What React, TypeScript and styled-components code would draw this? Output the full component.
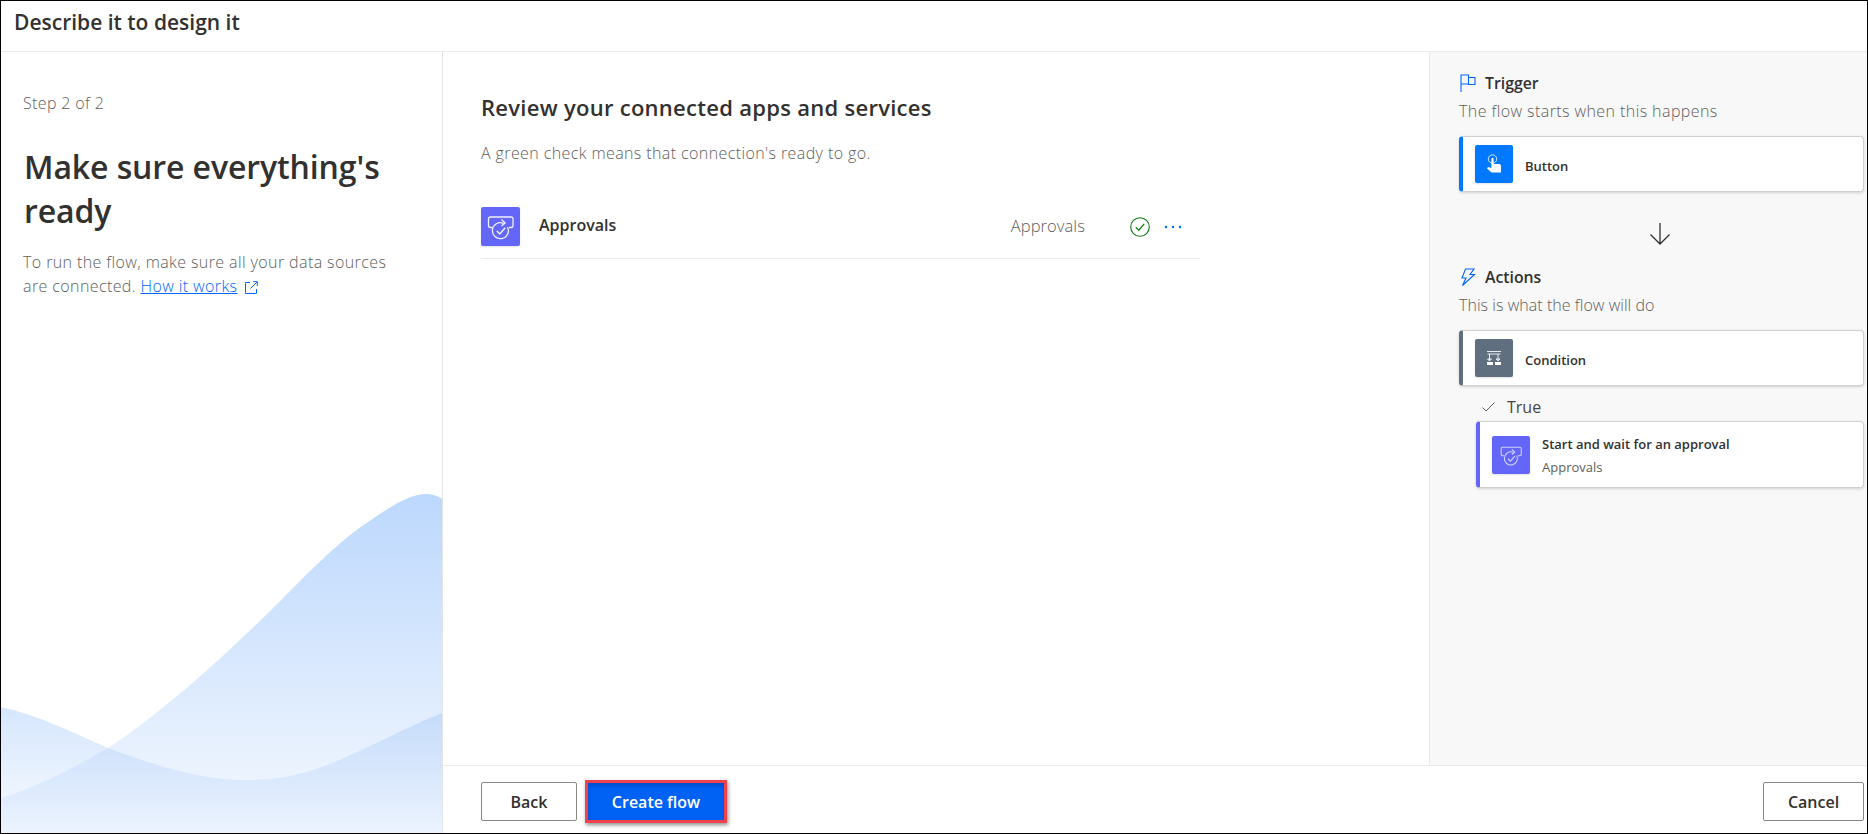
import React from "react";
import styled, { createGlobalStyle } from "styled-components";

const Global = createGlobalStyle`
  html, body { margin: 0; padding: 0; background: #fff; }
  body { font-family: "Open Sans", "Liberation Sans", sans-serif; color: #323130; }
  * { box-sizing: border-box; }
`;

const Frame = styled.div`
  width: 1868px;
  height: 834px;
  border: 1px solid #000;
  display: flex;
  flex-direction: column;
  overflow: hidden;
`;
const Header = styled.header`
  height: 51px;
  flex: none;
  border-bottom: 1px solid #edebe9;
  padding: 7px 0 0 13px;
  font-size: 21px;
  line-height: 28px;
  font-weight: 600;
`;
const Body = styled.div`
  flex: 1;
  display: flex;
  min-height: 0;
`;
const Side = styled.aside`
  width: 442px;
  flex: none;
  border-right: 1px solid #e4e4e4;
  display: flex;
  flex-direction: column;
  padding-top: 40px;
  min-height: 0;
`;
const SideText = styled.div`
  padding: 0 40px 0 22px;
`;
const Step = styled.div`
  font-size: 16px;
  line-height: 22px;
  font-weight: 300;
  letter-spacing: 0.35px;
  color: #605e5c;
`;
const BigTitle = styled.h1`
  margin: 31px 0 0 1px;
  font-size: 32px;
  line-height: 44px;
  font-weight: 600;
  letter-spacing: -0.1px;
`;
const SideCopy = styled.p`
  margin: 17px 0 0;
  font-size: 16px;
  line-height: 24px;
  font-weight: 300;
  letter-spacing: 0.4px;
  color: #605e5c;
`;
const Link = styled.a`
  color: #0066ff;
  text-decoration: underline;
`;
const External = styled.svg`
  width: 13px;
  height: 13px;
  margin-left: 8px;
  vertical-align: -2px;
`;
const Waves = styled.svg`
  display: block;
  margin-top: auto;
  width: 441px;
  height: 342px;
  flex: none;
`;
const Work = styled.div`
  flex: 1;
  display: flex;
  flex-direction: column;
  min-width: 0;
`;
const Columns = styled.div`
  flex: 1;
  display: flex;
  min-height: 0;
`;
const Center = styled.main`
  flex: 1;
  padding: 40px 0 0 38px;
  min-width: 0;
`;
const CenterInner = styled.div`
  width: 719px;
`;
const CenterTitle = styled.h2`
  margin: 0;
  font-size: 22px;
  line-height: 30px;
  font-weight: 600;
  letter-spacing: 0.28px;
`;
const CenterSub = styled.p`
  margin: 20px 0 0;
  font-size: 16px;
  line-height: 22px;
  font-weight: 300;
  letter-spacing: 0.4px;
  color: #605e5c;
`;
const ConnRow = styled.div`
  margin-top: 43px;
  height: 52px;
  border-bottom: 1px solid #edebe9;
  display: flex;
  align-items: flex-start;
`;
const ConnName = styled.div`
  margin-left: 19px;
  flex: 1;
  line-height: 37px;
  font-size: 16px;
  font-weight: 600;
`;
const ConnKind = styled.div`
  line-height: 37px;
  font-size: 16.5px;
  font-weight: 300;
  letter-spacing: 0.1px;
  color: #605e5c;
`;
const ConnStatus = styled.svg`
  margin: 9px 0 0 44px;
  width: 22px;
  height: 22px;
`;
const Dots = styled.svg`
  margin: 9px 16px 0 11px;
  width: 22px;
  height: 22px;
`;
const IconTile = styled.div<{ $bg: string; $size: number }>`
  width: ${(p) => p.$size}px;
  height: ${(p) => p.$size}px;
  flex: none;
  border-radius: 2px;
  background: ${(p) => p.$bg};
  display: flex;
  align-items: center;
  justify-content: center;
  box-shadow: 0 1px 2px rgba(0, 0, 0, 0.12);
`;
const Panel = styled.section`
  width: 438px;
  flex: none;
  background: #f8f8f8;
  border-left: 1px solid #edebe9;
  padding: 19px 3px 0 29px;
`;
const PanelHead = styled.div`
  display: flex;
  align-items: center;
  gap: 9px;
  height: 24px;
  margin-left: 1px;
  font-size: 15.8px;
  font-weight: 600;
`;
const PanelSub = styled.div<{ $track: number }>`
  margin-top: 5px;
  font-size: 16px;
  line-height: 22px;
  font-weight: 300;
  letter-spacing: ${(p) => p.$track}px;
  color: #605e5c;
`;
const Card = styled.div<{ $accent: string; $h: number }>`
  height: ${(p) => p.$h}px;
  background: #fff;
  border-radius: 4px;
  border: 1px solid #d2d0ce;
  border-left: 4px solid ${(p) => p.$accent};
  box-shadow: 0 1px 3px rgba(0, 0, 0, 0.16);
  display: flex;
  align-items: center;
  gap: 12px;
  padding-left: 12px;
`;
const CardName = styled.div`
  font-size: 13px;
  line-height: 18px;
  font-weight: 600;
`;
const SoloName = styled(CardName)`
  padding-top: 3px;
`;
const CardSub = styled.div`
  margin-top: 6px;
  font-size: 13px;
  line-height: 16px;
  color: #605e5c;
  font-weight: 400;
`;
const ArrowRow = styled.div`
  height: 73px;
  display: flex;
  align-items: center;
  justify-content: center;
  padding: 10px 3px 0 0;
`;
const CardSlot = styled.div`
  margin-top: 14px;
`;
const TrueRow = styled.div`
  display: flex;
  align-items: center;
  height: 24px;
  margin: 9px 0 2px 23px;
  gap: 12px;
  font-size: 16px;
  color: #484644;
  font-weight: 500;
`;
const Nested = styled.div`
  margin-left: 17px;
`;
const Footer = styled.footer`
  height: 68px;
  flex: none;
  border-top: 1px solid #edebe9;
  display: flex;
  align-items: flex-start;
  padding: 16px 3px 0 38px;
`;
const Btn = styled.button`
  height: 39px;
  background: #fff;
  border: 1px solid #8a8886;
  border-radius: 2px;
  font-family: inherit;
  font-size: 16px;
  font-weight: 600;
  color: #323130;
  padding: 0;
`;
const BackBtn = styled(Btn)`
  width: 96px;
`;
const CancelBtn = styled(Btn)`
  width: 101px;
  margin-left: auto;
`;
const PrimaryBtn = styled(Btn)`
  width: 142px;
  height: 43px;
  margin: -2px 0 0 8px;
  border: 3px solid #f0424c;
  border-radius: 0;
  background: #0062f5;
  color: #fff;
  box-shadow: 1px 2px 4px rgba(0, 0, 0, 0.45), inset 0 3px 4px rgba(0, 40, 130, 0.4);
`;

const ApprovalGlyph = ({ size, opacity }: { size: number; opacity: number }) => (
  <svg width={size} height={size} viewBox="0 0 39 39" fill="none" stroke="#fff" strokeOpacity={opacity} strokeWidth="1.3">
    <path d="M11.5 20.5 H9.5 Q7.5 20.5 7.5 18.5 V12 Q7.5 10 9.5 10 H30 Q32 10 32 12 V18.5 Q32 20.5 30 20.5 H28" />
    <path d="M22.5 16.3 A8 8 0 1 0 26.5 20" />
    <path d="M20.5 12.6 L24 16 L20.5 19" strokeWidth="1.4" />
    <path d="M15.8 24 L18.8 27 L24.2 20.8" strokeWidth="1.5" />
  </svg>
);

export default function App() {
  return (
    <>
      <Global />
      <Frame>
        <Header>Describe it to design it</Header>
        <Body>
          <Side>
            <SideText>
              <Step>Step 2 of 2</Step>
              <BigTitle>Make sure everything's ready</BigTitle>
              <SideCopy>
                To run the flow, make sure all your data sources are connected.{" "}
                <Link href="#">How it works</Link>
                <External viewBox="0 0 13 13" fill="none" stroke="#0066ff" strokeWidth="1">
                  <path d="M5 1.5 H0.5 V12.5 H11.5 V8" />
                  <path d="M5.5 7.5 L12 1 M8 0.7 H12.3 V5" />
                </External>
              </SideCopy>
            </SideText>
            <Waves viewBox="0 -3 441 342">
              <defs>
                <linearGradient id="wa" gradientUnits="userSpaceOnUse" x1="0" y1="0" x2="0" y2="290">
                  <stop offset="0" stopColor="#bcd8fd" />
                  <stop offset="1" stopColor="#edf4fe" />
                </linearGradient>
                <linearGradient id="wb" gradientUnits="userSpaceOnUse" x1="0" y1="219" x2="0" y2="339">
                  <stop offset="0" stopColor="#c6dcfb" />
                  <stop offset="1" stopColor="#ebf3fe" />
                </linearGradient>
                <linearGradient id="wc" gradientUnits="userSpaceOnUse" x1="0" y1="213" x2="0" y2="310">
                  <stop offset="0" stopColor="#d5e6fd" />
                  <stop offset="1" stopColor="#f0f6fe" />
                </linearGradient>
              </defs>
              <path
                d="M0 213 C40 222 75 240 107 254 C155 272 200 286 245 286 C265 286 285 284 305 278 C350 265 395 237 441 219 V339 H0 Z"
                fill="url(#wc)"
              />
              <path
                d="M0 304 C40 292 75 272 107 254 C135 236 160 215 187 193 C225 160 265 122 300 86 C320 66 345 42 370 26 C390 12 410 0 425 0 Q434 0 441 5 V339 H0 Z"
                fill="url(#wa)"
              />
              <path
                d="M0 304 C40 292 75 272 107 254 C155 272 200 286 245 286 C265 286 285 284 305 278 C350 265 395 237 441 219 V339 H0 Z"
                fill="url(#wb)"
              />
            </Waves>
          </Side>
          <Work>
            <Columns>
              <Center>
                <CenterInner>
                  <CenterTitle>Review your connected apps and services</CenterTitle>
                  <CenterSub>A green check means that connection's ready to go.</CenterSub>
                  <ConnRow>
                    <IconTile $bg="#6366f6" $size={39}>
                      <ApprovalGlyph size={39} opacity={0.9} />
                    </IconTile>
                    <ConnName>Approvals</ConnName>
                    <ConnKind>Approvals</ConnKind>
                    <ConnStatus viewBox="0 0 22 22" fill="none" stroke="#107c10">
                      <circle cx="11" cy="11" r="9.3" strokeWidth="1.1" />
                      <path d="M6.8 11.3 L9.8 14.2 L15.2 7.8" strokeWidth="1.3" />
                    </ConnStatus>
                    <Dots viewBox="0 0 22 22" fill="#0066ff">
                      <circle cx="4" cy="11" r="1.2" />
                      <circle cx="11" cy="11" r="1.2" />
                      <circle cx="18" cy="11" r="1.2" />
                    </Dots>
                  </ConnRow>
                </CenterInner>
              </Center>
              <Panel>
                <PanelHead>
                  <svg width="16" height="18" viewBox="0 0 16 18" fill="none" stroke="#0066ff" strokeWidth="1.1">
                    <path d="M1 18 V1 H8.5 V10 H1 M8.5 3.5 H15 V10.5 H8.5 V10" />
                  </svg>
                  Trigger
                </PanelHead>
                <PanelSub $track={0.42}>The flow starts when this happens</PanelSub>
                <CardSlot>
                  <Card $accent="#0078ff" $h={56}>
                    <IconTile $bg="#0078ff" $size={38}>
                      <svg width="16" height="20" viewBox="0 0 16 20">
                        <circle cx="6.5" cy="5" r="4.2" fill="none" stroke="#fff" strokeOpacity="0.8" strokeWidth="1" />
                        <path
                          d="M5.4 5 Q5.4 3.8 6.5 3.8 Q7.6 3.8 7.6 5 V10 H13 Q15 10 15 12 V18.5 H5.5 L1 14.5 L2 13 L5.4 14 Z"
                          fill="#fff"
                        />
                      </svg>
                    </IconTile>
                    <SoloName>Button</SoloName>
                  </Card>
                </CardSlot>
                <ArrowRow>
                  <svg width="22" height="24" viewBox="0 0 22 24" fill="none" stroke="#323130" strokeWidth="1.3">
                    <path d="M11 1 V22 M1.5 12.5 L11 22 L20.5 12.5" />
                  </svg>
                </ArrowRow>
                <PanelHead>
                  <svg width="16" height="18" viewBox="0 0 16 18" fill="none" stroke="#0066ff" strokeWidth="1.1">
                    <path d="M5.5 1 H14 L10 6.5 H14.5 L2.5 17.5 L6 10 H2 Z" />
                  </svg>
                  Actions
                </PanelHead>
                <PanelSub $track={0.05}>This is what the flow will do</PanelSub>
                <CardSlot>
                  <Card $accent="#606f7f" $h={56}>
                    <IconTile $bg="#606f7f" $size={38}>
                      <svg width="16" height="16" viewBox="0 0 16 16" fill="none" stroke="#fff" strokeOpacity="0.85">
                        <path d="M1 1.5 H15 M1.5 4 H14.5 M3.5 4 V10 M12 4 V10 M1.5 9 H5.5 L3.5 11 Z M10 9 H14 L12 11 Z" strokeWidth="1" />
                        <path d="M1 13.5 H7 M9 13.5 H15" strokeWidth="3" strokeOpacity="1" />
                      </svg>
                    </IconTile>
                    <SoloName>Condition</SoloName>
                  </Card>
                </CardSlot>
                <TrueRow>
                  <svg width="13" height="10" viewBox="0 0 13 10" fill="none" stroke="#605e5c" strokeWidth="1">
                    <path d="M0.5 5.5 L4 9 L12.5 0.5" />
                  </svg>
                  True
                </TrueRow>
                <Nested>
                  <Card $accent="#6366f6" $h={67}>
                    <IconTile $bg="#6366f6" $size={38}>
                      <ApprovalGlyph size={32} opacity={0.7} />
                    </IconTile>
                    <div>
                      <CardName>Start and wait for an approval</CardName>
                      <CardSub>Approvals</CardSub>
                    </div>
                  </Card>
                </Nested>
              </Panel>
            </Columns>
            <Footer>
              <BackBtn>Back</BackBtn>
              <PrimaryBtn>Create flow</PrimaryBtn>
              <CancelBtn>Cancel</CancelBtn>
            </Footer>
          </Work>
        </Body>
      </Frame>
    </>
  );
}
